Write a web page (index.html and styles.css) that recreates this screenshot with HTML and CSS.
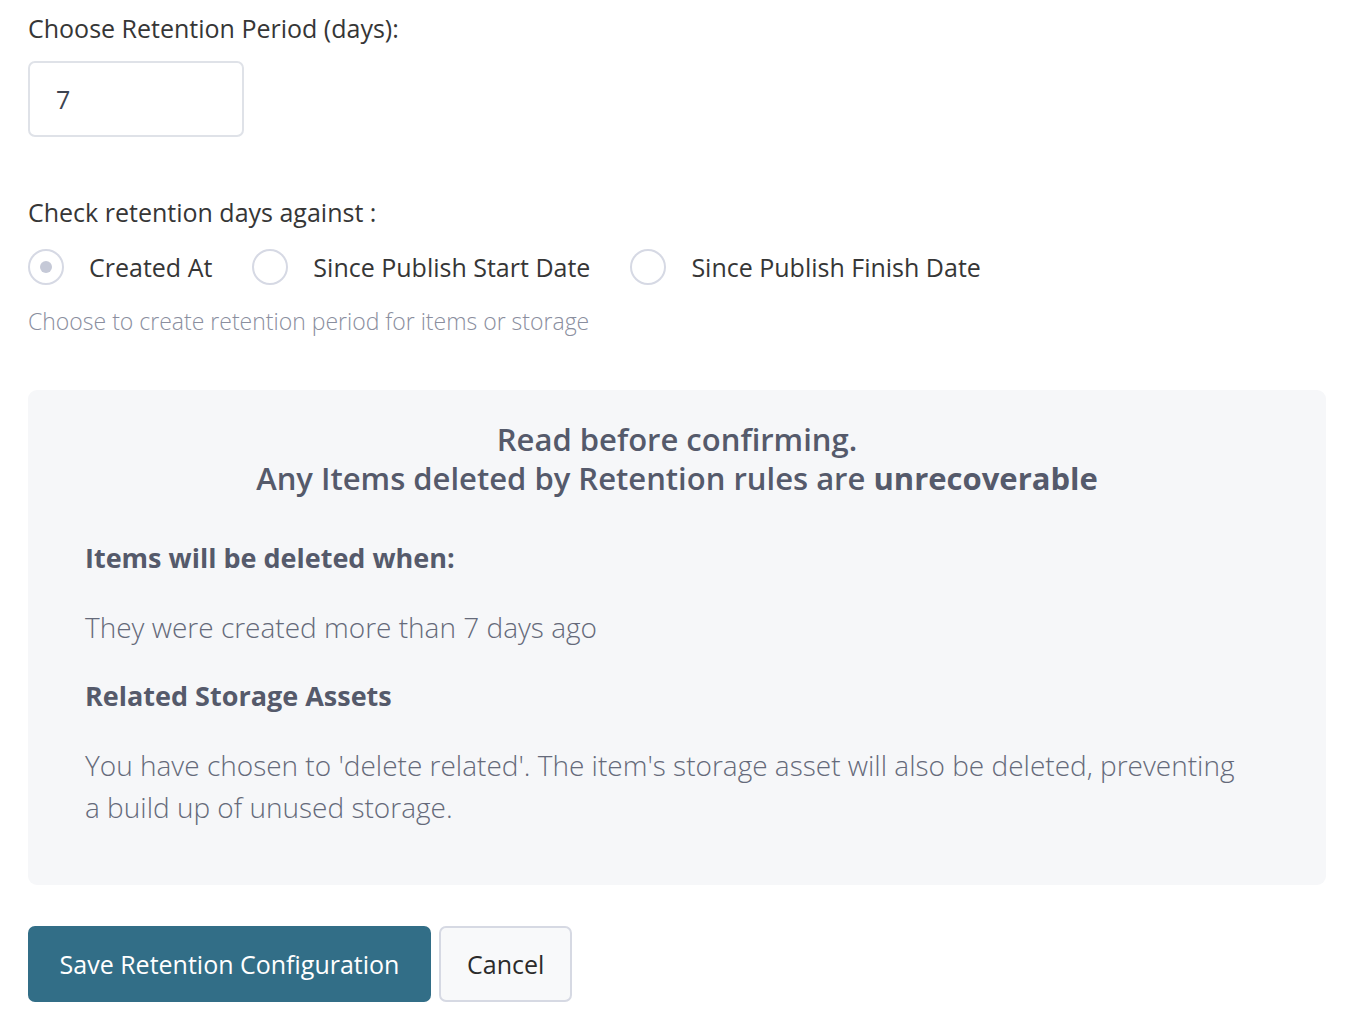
FILE: index.html
```html
<!DOCTYPE html>
<html lang="en">
<head>
    <meta charset="UTF-8">
    <title>Retention</title>
    <link rel="stylesheet" href="styles.css">
</head>
<body>
    <form class="retention">
        <label class="field-label" for="days">Choose Retention Period (days):</label>
        <input class="days-input" id="days" type="text" value="7">

        <div class="field-label against">Check retention days against :</div>
        <div class="radio-row">
            <label class="radio"><input type="radio" name="against" checked> <span>Created At</span></label>
            <label class="radio"><input type="radio" name="against"> <span>Since Publish Start Date</span></label>
            <label class="radio"><input type="radio" name="against"> <span>Since Publish Finish Date</span></label>
        </div>
        <div class="help">Choose to create retention period for items or storage</div>

        <div class="notice">
            <h3 class="notice-title">Read before confirming.<br>Any Items deleted by Retention rules are <b>unrecoverable</b></h3>
            <h4 class="notice-head">Items will be deleted when:</h4>
            <p class="notice-text">They were created more than 7 days ago</p>
            <h4 class="notice-head">Related Storage Assets</h4>
            <p class="notice-text long">You have chosen to 'delete related'. The item's storage asset will also be deleted, preventing a build up of unused storage.</p>
        </div>

        <div class="actions">
            <button type="button" class="btn-save">Save Retention Configuration</button>
            <button type="button" class="btn-cancel">Cancel</button>
        </div>
    </form>
</body>
</html>
```

FILE: styles.css
```css
body
{
    margin: 0; padding: 0 22px 0 28px;
    font-family: "Open Sans", "Noto Sans", sans-serif;
    color: #363636; background: #fff;
}

.field-label
{
    display: block; font-size: 25px; line-height: 36px;
    margin-top: 10px;
}

.days-input
{
    display: block; box-sizing: border-box;
    width: 216px; height: 76px; margin-top: 15px;
    border: 2px solid #dfe2e8; border-radius: 7px;
    padding: 0 26px; font-size: 25px; color: #3d4350;
    font-family: inherit; outline: none;
}

.against { margin-top: 57px; }

.radio-row
{
    display: flex; align-items: center; gap: 40px;
    margin-top: 19px; height: 36px;
}

.radio
{
    display: flex; align-items: center; gap: 25px;
    font-size: 25px; line-height: 36px;
}

.radio input
{
    appearance: none; margin: 0;
    width: 36px; height: 36px; box-sizing: border-box;
    border: 2px solid #d6d9e4; border-radius: 50%;
    background: #fff; display: grid; place-items: center;
}

.radio input:checked::after
{
    content: ""; width: 12px; height: 12px;
    border-radius: 50%; background: #c5c9d7;
}

.help
{
    margin-top: 20px; font-size: 23px; line-height: 32px;
    color: #8a8e9e; font-weight: 300;
}

.notice
{
    margin-top: 53px; background: #f6f7f9; border-radius: 9px;
    padding: 30px 76px 57px 57px; color: #555a6b;
}

.notice-title
{
    margin: 0 -19px 0 0; text-align: center; font-size: 31px; line-height: 39px;
    font-weight: 600;
}

.notice-title b { font-weight: 700; }

.notice-head
{
    margin: 42px 0 0; font-size: 27px; line-height: 36px; font-weight: 700;
}

.notice-text
{
    margin: 33px 0 0; font-size: 28px; line-height: 36px;
    font-weight: 300; color: #656a7a;
}

.notice-text + .notice-head { margin-top: 33px; }

.notice-text.long { margin-top: 30px; line-height: 42px; }

.actions
{
    display: flex; gap: 8px; margin-top: 41px;
}

.actions button
{
    box-sizing: border-box; height: 76px; border-radius: 7px;
    font-family: inherit; font-size: 25px; padding: 0 26px;
}

.btn-save
{
    background: #326e87; color: #fff; border: none; width: 403px;
}

.btn-cancel
{
    background: #f8f9fa; color: #2b2b2b; border: 2px solid #d6d9e3;
    width: 133px; height: 75px;
}
```
